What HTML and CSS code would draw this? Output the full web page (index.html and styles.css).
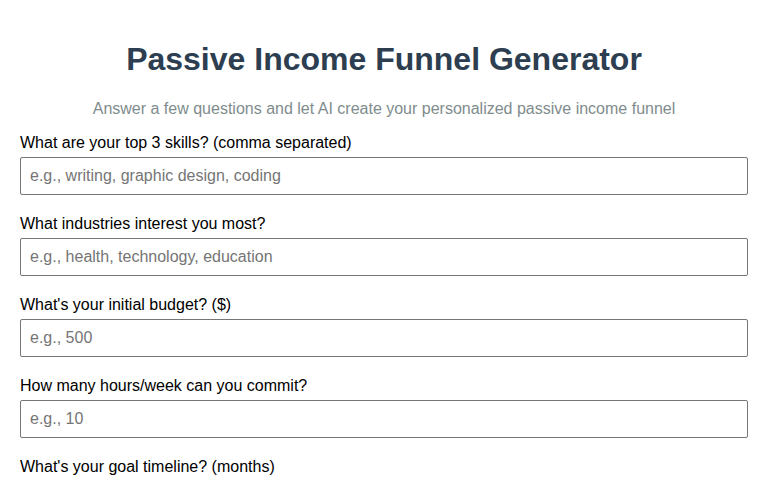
FILE: index.html
```html
<!DOCTYPE html>
<html lang="en">
<head>
  <meta charset="UTF-8">
  <meta name="viewport" content="width=device-width, initial-scale=1.0">
  <title>Passive Income Funnel Generator</title>
  <link rel="stylesheet" href="styles.css">
</head>
<body>
  <div class="container">
    <h1>Passive Income Funnel Generator</h1>
    <p class="subtitle">Answer a few questions and let AI create your personalized passive income funnel</p>
    <!-- questions -->
    <form id="funnel-form">
      <div class="form-group">
        <label for="skills">What are your top 3 skills? (comma separated)</label>
        <input type="text" id="skills" placeholder="e.g., writing, graphic design, coding">
      </div>
      <div class="form-group">
        <label for="industries">What industries interest you most?</label>
        <input type="text" id="industries" placeholder="e.g., health, technology, education">
      </div>
      <div class="form-group">
        <label for="budget">What's your initial budget? ($)</label>
        <input type="number" id="budget" placeholder="e.g., 500">
      </div>
      <div class="form-group">
        <label for="hours">How many hours/week can you commit?</label>
        <input type="number" id="hours" placeholder="e.g., 10">
      </div>
      <div class="form-group">
        <label for="timeline">What's your goal timeline? (months)</label>
        <input type="number" id="timeline" placeholder="e.g., 6">
      </div>
    </form>
  </div>
</body>
</html>
```

FILE: styles.css
```css
body { font-family: "Liberation Sans", Arial, sans-serif; margin: 0; background: #fff; color: #000; }
.container { max-width: 800px; margin: 0 auto; padding: 20px; }
h1 { text-align: center; color: #2c3e50; font-size: 32px; margin: 21px 0 22px; }
.subtitle { text-align: center; color: #7f8c8d; font-size: 16px; margin: 16px 0; }
/* form */
.form-group { margin-bottom: 20px; }
.form-group label { display: block; margin-bottom: 5px; font-size: 16px; }
.form-group input { width: 100%; box-sizing: border-box; padding: 10px 9px; font-size: 16px; font-family: "Liberation Sans", Arial, sans-serif; border: 1px solid #767676; border-radius: 2px; height: 38px; }
.form-group input::placeholder { color: #757575; }
input[type=number]::-webkit-inner-spin-button { -webkit-appearance: none; }
```
